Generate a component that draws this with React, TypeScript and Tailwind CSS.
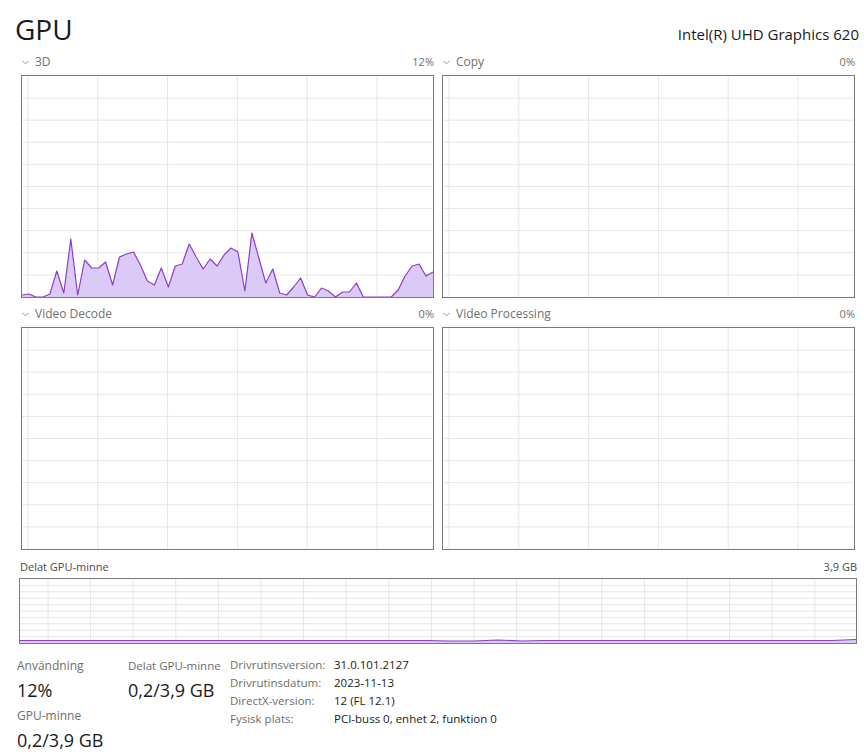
import React from 'react';

// ── Data ─────────────────────────────────────────────────────────────────────
// 3D usage samples, y in px from the top of the graph box (box height 223)
const usage3d = [
  295, 294, 297, 297, 294, 271, 293, 239, 295, 260, 268, 268, 262, 285, 257, 254, 252, 265, 281, 285,
  268, 287, 266, 264, 244, 257, 269, 259, 266, 255, 248, 252, 291, 233, 258, 283, 269, 293, 295, 287,
  278, 295, 297, 288, 291, 297, 292, 292, 283, 297, 297, 297, 297, 297, 290, 276, 266, 264, 276, 272,
].map(v => v - 76);

const memLine = [
  61.5, 61.5, 61.5, 61.5, 61.5, 61.5, 61.5, 61.5, 61.5, 61.5, 61.5, 61.5, 61.5, 61.5, 61.5, 61.5, 61.5, 61.5,
  62, 62, 61, 62, 61.5, 61.5, 61.5, 61.5, 61.5, 61.5, 61.5, 61.5, 61.5, 61.5, 61.5, 61.5, 61.5, 60.5,
];

const details = [
  ['Drivrutinsversion:', '31.0.101.2127'],
  ['Drivrutinsdatum:', '2023-11-13'],
  ['DirectX-version:', '12 (FL 12.1)'],
  ['Fysisk plats:', 'PCI-buss 0, enhet 2, funktion 0'],
];

// ── Graph ────────────────────────────────────────────────────────────────────
type GraphProps = {
  w: number;
  h: number;
  colStart: number;
  colStep: number;
  rows: number;
  data?: number[];
};

const Graph: React.FC<GraphProps> = ({ w, h, colStart, colStep, rows, data }) => {
  const cols: number[] = [];
  for (let x = colStart; x < w; x += colStep) cols.push(x);
  const hLines: number[] = [];
  for (let i = 1; i < rows; i++) hLines.push((h / rows) * i);

  let line = '';
  let area = '';
  if (data) {
    const step = w / (data.length - 1);
    const pts = data.map((y, i) => `${(i * step).toFixed(1)},${y}`);
    line = 'M' + pts.join(' L');
    area = line + ` L${w},${h} L0,${h} Z`;
  }

  return (
    <svg width={w} height={h} className="block">
      {hLines.map(y => (
        <line key={'h' + y} x1={0} x2={w} y1={y} y2={y} stroke="#e6e6e6" strokeWidth={1} />
      ))}
      {cols.map(x => (
        <line key={'v' + x} x1={x} x2={x} y1={0} y2={h} stroke="#e6e6e6" strokeWidth={1} />
      ))}
      {data && (
        <>
          <path d={area} fill="#dccaf6" />
          <path d={line} fill="none" stroke="#8b3fc7" strokeWidth={1.2} strokeLinejoin="round" />
        </>
      )}
    </svg>
  );
};

const Chevron = () => (
  <svg width="7" height="5" viewBox="0 0 7 5" className="mr-[6px] mt-[1px]">
    <path d="M0.5 0.8 L3.5 3.8 L6.5 0.8" fill="none" stroke="#8a8a8a" strokeWidth="0.9" />
  </svg>
);

const Engine: React.FC<{ title: string; pct: string; data?: number[] }> = ({ title, pct, data }) => (
  <div className="flex flex-col">
    <div className="flex h-[29px] items-center justify-between pl-[1px] pt-[3px]">
      <div className="flex items-center text-[12px] text-[#707070]">
        <Chevron />
        <span>{title}</span>
      </div>
      <span className="text-[11px] text-[#707070]">{pct}</span>
    </div>
    <div className="h-[223px] w-[413px] border border-[#7a7a7a]">
      <Graph w={411} h={221} colStart={6} colStep={69.8} rows={10} data={data} />
    </div>
  </div>
);

export default function App() {
  return (
    <div className="h-[755px] w-[864px] overflow-hidden bg-white font-['Open_Sans',sans-serif] text-[#1a1a1a]">
      {/* header */}
      <div className="flex h-[46px] items-baseline justify-between pl-[15px] pr-[5px] pt-[11px]">
        <span className="text-[28px] leading-[36px]">GPU</span>
        <span className="text-[15px]">Intel(R) UHD Graphics 620</span>
      </div>

      {/* engines */}
      <div className="ml-[21px] grid w-[835px] grid-cols-[413px_413px] gap-x-[8px]">
        <Engine title="3D" pct="12%" data={usage3d} />
        <Engine title="Copy" pct="0%" />
        <Engine title="Video Decode" pct="0%" />
        <Engine title="Video Processing" pct="0%" />
      </div>

      {/* shared memory */}
      <div className="ml-[19px] w-[838px]">
        <div className="flex h-[28px] items-end justify-between pb-[3px] pl-[1px] text-[11px] text-[#4a4a4a]">
          <span>Delat GPU-minne</span>
          <span>3,9 GB</span>
        </div>
        <div className="h-[66px] border border-[#7a7a7a]">
          <Graph w={836} h={64} colStart={28} colStep={42.6} rows={10} data={memLine} />
        </div>
      </div>

      {/* stats */}
      <div className="ml-[17px] mt-[9px] flex items-start">
        <div className="flex w-[111px] flex-col">
          <span className="text-[12px] leading-[25px] text-[#6d6d6d]">Användning</span>
          <span className="text-[18px] leading-[25px]">12%</span>
          <span className="text-[12px] leading-[25px] text-[#6d6d6d]">GPU-minne</span>
          <span className="text-[18px] leading-[25px]">0,2/3,9 GB</span>
        </div>
        <div className="flex w-[102px] flex-col">
          <span className="text-[11.5px] leading-[25px] text-[#6d6d6d]">Delat GPU-minne</span>
          <span className="text-[18px] leading-[25px]">0,2/3,9 GB</span>
        </div>
        <div className="grid grid-cols-[104px_auto] content-start pt-[3px] text-[11.5px] leading-[18px]">
          {details.map(([k, v]) => (
            <React.Fragment key={k}>
              <span className="text-[#6d6d6d]">{k}</span>
              <span>{v}</span>
            </React.Fragment>
          ))}
        </div>
      </div>
    </div>
  );
}
